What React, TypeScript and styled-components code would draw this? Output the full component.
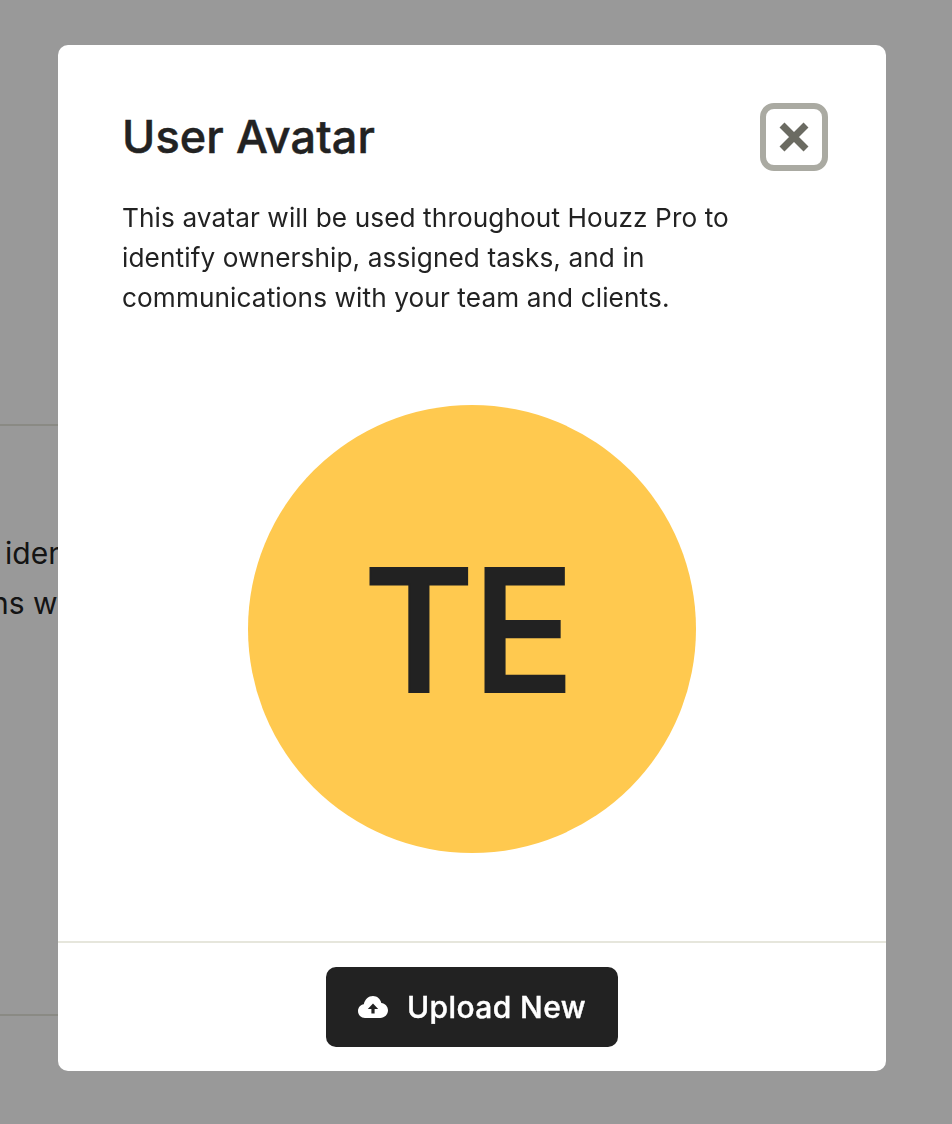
import React from "react";
import styled, { createGlobalStyle } from "styled-components";

const Global = createGlobalStyle`
  html, body { margin: 0; padding: 0; background: #fff; }
  * { box-sizing: border-box; }
  body { font-family: Inter, "Liberation Sans", sans-serif; color: #222; -webkit-font-smoothing: antialiased; }
`;

const Page = styled.div`
  width: 952px;
  height: 1124px;
  overflow: hidden;
  padding-top: 424px;
`;

const Rule = styled.div`
  width: 100px;
  height: 2px;
  background: #e6e6dc;
`;

const Section = styled.section`
  height: 588px;
  padding-top: 102px;
`;

const BackText = styled.p<{ $indent: number }>`
  margin: 0 0 0 ${(p) => p.$indent}px;
  font-size: 30px;
  line-height: 50px;
  white-space: nowrap;
  color: #222;
`;

const Scrim = styled.div`
  position: fixed;
  inset: 0;
  background: rgba(0, 0, 0, 0.4);
  padding: 45px 66px 53px 58px;
`;

const Modal = styled.div`
  width: 828px;
  height: 1026px;
  background: #fff;
  border-radius: 10px;
  display: flex;
  flex-direction: column;
`;

const Body = styled.div`
  flex: 1;
  padding: 58px 58px 0 64px;
  display: flex;
  flex-direction: column;
`;

const Header = styled.div`
  display: flex;
  justify-content: space-between;
  align-items: flex-start;
`;

const Title = styled.h2`
  margin: 6px 0 0;
  font-size: 45px;
  line-height: 56px;
  font-weight: 500;
  letter-spacing: 0.1px;
  -webkit-text-stroke: 0.5px #222;
  color: #222;
`;

const CloseButton = styled.button`
  width: 68px;
  height: 68px;
  padding: 0;
  background: #fff;
  border: 6px solid #aaaaa2;
  border-radius: 14px;
  display: flex;
  align-items: center;
  justify-content: center;
`;

const Description = styled.p`
  margin: 27px 0 0;
  width: 640px;
  font-size: 26.2px;
  letter-spacing: 0.1px;
  line-height: 40px;
  color: #222;
`;

const AvatarWrap = styled.div`
  display: flex;
  justify-content: center;
  margin: 87px 0 0 -6px;
`;

const Avatar = styled.div`
  width: 448px;
  height: 448px;
  padding-right: 9px;
  border-radius: 50%;
  background: #ffc94f;
  display: flex;
  align-items: center;
  justify-content: center;
  font-size: 171px;
  font-weight: 500;
  -webkit-text-stroke: 2px #222;
  color: #222;
  letter-spacing: -3px;
`;

const Footer = styled.div`
  border-top: 2px solid #e6e6dc;
  height: 130px;
  padding-top: 24px;
  display: flex;
  justify-content: center;
`;

const UploadButton = styled.button`
  width: 292px;
  height: 80px;
  background: #222;
  color: #fff;
  border: 0;
  border-radius: 10px;
  font-family: inherit;
  font-size: 30px;
  font-weight: 500;
  -webkit-text-stroke: 0.4px #fff;
  letter-spacing: 0.4px;
  display: flex;
  align-items: center;
  justify-content: center;
  gap: 19px;
`;

export default function App() {
  return (
    <>
      <Global />
      <Page>
        <Rule />
        <Section>
          <BackText $indent={5}>iden</BackText>
          <BackText $indent={-9}>ns w</BackText>
        </Section>
        <Rule />
      </Page>
      <Scrim>
        <Modal>
          <Body>
            <Header>
              <Title>User Avatar</Title>
              <CloseButton aria-label="Close">
                <svg width="32" height="32" viewBox="0 0 32 32">
                  <path d="M4 4 L28 28 M28 4 L4 28" stroke="#6b6b62" strokeWidth="7" fill="none" />
                </svg>
              </CloseButton>
            </Header>
            <Description>
              This avatar will be used throughout Houzz Pro to identify ownership, assigned tasks, and in communications with your team and clients.
            </Description>
            <AvatarWrap>
              <Avatar>TE</Avatar>
            </AvatarWrap>
          </Body>
          <Footer>
            <UploadButton>
              <svg width="30" height="22" viewBox="0 0 30 22">
                <path
                  fillRule="evenodd"
                  fill="#fff"
                  d="M15 0 C19 0 22.5 2.8 23.3 7 C27 7.4 30 10.4 30 14.3 C30 18.5 26.6 22 22.3 22 L7 22 C3.1 22 0 19 0 15 C0 11.6 2.4 8.8 5.8 8.2 C6.8 3.4 10.5 0 15 0 Z M15 7.5 L9.8 13 L13.4 13 L13.4 17.5 L16.6 17.5 L16.6 13 L20.2 13 Z"
                />
              </svg>
              Upload New
            </UploadButton>
          </Footer>
        </Modal>
      </Scrim>
    </>
  );
}
